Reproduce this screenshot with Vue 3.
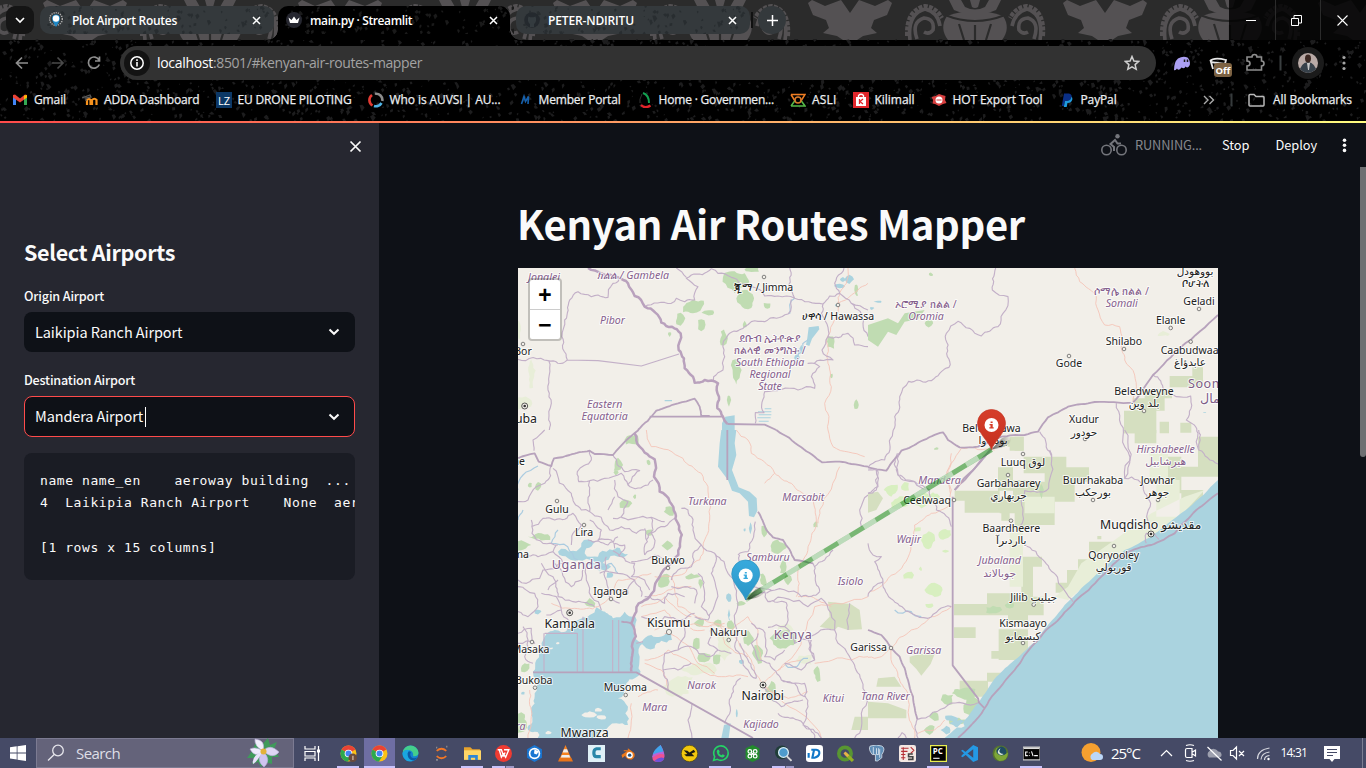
<script setup>
/* Fits a text run to a given width by spreading the difference over its letters. */
const vFit = {
  mounted(el, { value }) {
    const n = el.textContent.length
    if (!n || !value) return
    const natural = el.getBoundingClientRect().width
    el.style.letterSpacing = ((value - natural) / n).toFixed(3) + 'px'
  }
}

let seed = 7
const rnd = () => {
  seed = (seed * 16807) % 2147483647
  return seed / 2147483647
}

/* Turns a coarse list of points into a naturally jagged line. */
function rough(str, amp = 0.16, close = false) {
  let pts = str.trim().split(/\s+/).map(p => p.split(',').map(Number))
  if (close) pts.push(pts[0])
  for (let k = 0; k < 3; k++) {
    const out = [pts[0]]
    for (let i = 1; i < pts.length; i++) {
      const [x1, y1] = pts[i - 1]
      const [x2, y2] = pts[i]
      const dx = x2 - x1
      const dy = y2 - y1
      if (Math.hypot(dx, dy) > 14) {
        const t = (rnd() - 0.5) * 2 * amp
        out.push([(x1 + x2) / 2 - dy * t, (y1 + y2) / 2 + dx * t])
      }
      out.push([x2, y2])
    }
    pts = out
  }
  return 'M' + pts.map(p => p[0].toFixed(1) + ' ' + p[1].toFixed(1)).join('L') + (close ? 'Z' : '')
}
const joinRough = (list, amp, close) => list.map(s => rough(s, amp, close)).join('')

function blob(x, y, rx, ry) {
  const a = []
  for (let i = 0; i < 8; i++) {
    const t = (i / 8) * Math.PI * 2
    const r = 0.6 + rnd() * 0.55
    a.push((x + Math.cos(t) * rx * r).toFixed(1) + ',' + (y + Math.sin(t) * ry * r).toFixed(1))
  }
  return rough(a.join(' '), 0.2, true)
}
const blobs = l => l.map(b => blob(...b)).join('')
/* Survey squares given by their left, top, right and bottom edges. */
const squares = l => l.map(([a, b, c, d]) => `M${a} ${b}H${c}V${d}H${a}Z`).join('')

const speckles = (n, w, h) => {
  let d = ''
  for (let i = 0; i < n; i++) {
    const x = rnd() * w
    const y = rnd() * h
    const s = 0.8 + rnd() * 2.2
    d += `M${x.toFixed(1)} ${y.toFixed(1)}l${s.toFixed(1)} ${(-s * rnd()).toFixed(1)}l${(s * rnd()).toFixed(1)} ${s.toFixed(1)}l${(-s).toFixed(1)} ${(s * rnd() * 1.4).toFixed(1)}Z`
  }
  return d
}
const toolbarSpeckles = speckles(1700, 1366, 82)
const tabSpeckles = speckles(90, 236, 28)

const regions = [
  {
    t: 'translate(0 -78) scale(.33333)',
    green: blobs([[650, 275, 45, 38], [680, 325, 28, 40], [525, 350, 40, 22], [488, 385, 16, 22], [572, 368, 22, 10], [550, 404, 14, 20], [618, 445, 12, 26], [680, 404, 8, 10], [748, 348, 14, 12], [455, 433, 6, 8], [937, 455, 14, 26], [1015, 300, 8, 26], [655, 540, 16, 40], [633, 630, 6, 18], [1015, 645, 8, 16], [940, 557, 5, 8], [700, 238, 30, 10]]),
    pale: blobs([[12, 640, 32, 24], [3, 420, 6, 40], [40, 560, 8, 50]]),
    water: blobs([[965, 288, 18, 9], [994, 268, 15, 14], [975, 268, 10, 8], [850, 480, 10, 16], [958, 345, 8, 5], [835, 502, 10, 10]]) + 'M872 412l30-4 2 10-22 28-8 22-10-4 4-20Z' + 'M720 664h40v3h-40zM722 673h38v3h-38zM718 682h40v3h-40zM722 692h30v3h-30zM760 655v3h-20v-3zM440 630h22v4h-22zM612 700l10-20 28-4v44h-38z',
    thick: ['210,234 250,250 300,262 330,280 350,318 380,350 412,368 430,398 462,410 488,430 482,480 500,535 525,560 530,578 560,570 600,580 603,620 598,655 615,680 628,702'],
    mid: ['360,720 415,662 480,640 530,626 545,650 550,678 575,678'],
    straight: 'M395 680H615M628 702L740 704L775 720',
    thin: ['0,508 90,512 148,510 132,440 140,390 155,330 180,305 220,320 240,315 270,322 285,280 310,262', '92,512 90,600 100,640 92,690 94,720', '380,350 460,340 475,325 500,335 530,330 540,290 505,265 520,255 580,236', '475,234 505,262', '580,236 600,250 640,262 700,290 740,318 780,318 830,325 915,342 965,310 1000,340 1050,360', '965,310 950,280 970,250 978,234', '815,234 812,290 830,325', '820,328 810,372 740,395 700,395 680,410 630,435 615,460 620,500 615,540 587,560 587,575', '915,342 910,370 930,440 990,430 1010,465 1050,470', '930,440 912,480 945,510 870,520 905,530 880,560 890,595 840,600 740,605 738,668 712,668 712,700', '1000,340 1035,400 1050,440'],
    plain: 'M148 510L240 512L370 528L483 492',
    road: ['990,234 985,280 960,340 945,400 925,450 930,520 940,590 920,640 930,720', '960,340 1000,315 1020,300 1050,280'],
    river: ['830,325 815,345 815,372', '870,450 850,480 835,510']
  },
  {
    t: 'translate(350 -8) scale(.33333)',
    green: 'M0 195L60 175L90 190L110 160L170 150L150 178L110 185L85 225L60 215L30 260L0 240Z' + blobs([[188, 44, 7, 6], [182, 190, 14, 12], [205, 566, 8, 4]]),
    pale: blobs([[885, 222, 20, 8], [910, 190, 18, 6]]),
    water: blobs([[30, 125, 12, 4], [12, 145, 6, 5], [1010, 458, 6, 2]]),
    olive: squares([[905, 348, 985, 382], [973, 322, 1005, 380], [830, 388, 912, 415], [795, 415, 890, 452], [768, 452, 865, 520], [875, 485, 903, 520], [937, 488, 970, 518], [440, 530, 467, 572], [400, 540, 440, 560]]),
    thick: [],
    mid: ['0,622 55,632 100,572 160,543 225,517 240,540 275,562 330,560 400,530 470,525 510,515 540,472 600,440 680,426 795,428 855,345 940,260 1050,165', '370,567 320,625 260,690'],
    straight: 'M0 0',
    thin: ['383,24 373,90 420,110 405,160 390,200 340,228 305,205 270,184 235,220 238,290 243,322 215,340 190,362 122,364 95,410 80,470 68,535 50,600 15,610 0,622', '745,430 765,530 770,655', '855,345 890,390 925,410 968,408 955,480 990,520 992,570 1050,612', '515,515 545,575 542,680', '88,580 90,645 140,665 180,690', '25,630 30,680 0,700'],
    plain: '',
    road: ['620,24 635,65 685,110 690,150 710,195 755,200 762,240 770,300 800,345 805,390 795,425', '380,570 280,565 250,610 247,700'],
    river: []
  },
  {
    t: 'translate(0 162) scale(.33333)',
    green: blobs([[342, 30, 24, 18], [70, 320, 42, 16], [10, 345, 26, 20], [455, 245, 16, 18], [392, 308, 14, 12], [448, 347, 18, 14], [437, 455, 24, 24], [300, 105, 16, 22], [320, 220, 20, 18], [293, 128, 8, 8], [780, 348, 28, 22], [738, 300, 12, 20], [797, 410, 14, 26], [735, 450, 12, 22], [893, 283, 8, 12], [810, 450, 12, 16], [795, 625, 40, 26], [560, 685, 26, 16], [596, 690, 16, 20], [720, 670, 16, 40], [690, 625, 20, 26], [545, 580, 18, 16], [670, 520, 14, 10], [215, 520, 18, 14], [60, 170, 12, 14], [35, 165, 8, 8], [350, 200, 6, 8], [535, 640, 14, 22], [520, 440, 24, 10], [898, 730, 12, 28], [760, 790, 16, 34], [392, 98, 8, 8], [548, 460, 8, 16], [600, 580, 14, 12], [20, 715, 18, 18], [10, 880, 16, 40], [640, 590, 12, 20]]),
    pale: blobs([[480, 770, 55, 35], [540, 720, 60, 20], [620, 650, 30, 40], [800, 600, 26, 16], [860, 690, 26, 18]]),
    olive: 'M930 515L998 522L1025 540L1032 598L990 600L960 590L950 600L905 590L935 560ZM1010 860h40v40h-50z',
    water: rough('45,725 55,690 72,650 85,612 110,600 150,598 180,570 215,555 235,532 262,545 285,565 320,545 352,560 345,600 375,640 365,680 368,725 350,745 325,760 318,790 300,805 330,830 322,850 330,885 295,880 255,905 230,924 60,924 30,900 40,850 50,790 55,750', 0.22, true) + rough('370,640 400,615 460,610 462,630 430,632 410,655 385,655', 0.2, true) + 'M610 0L655 0L650 40L655 75L642 120L662 172L695 185L716 205L718 242L708 262L693 258L690 215L665 190L642 182L630 150L600 110L605 40Z' + rough('120,365 165,362 190,340 232,335 205,355 200,370 240,380 275,358 330,372 300,380 260,392 245,425 230,395 180,390 150,385', 0.25, true) + blobs([[632, 505, 9, 14], [633, 555, 4, 20], [670, 695, 10, 7], [250, 410, 26, 10], [60, 545, 14, 8], [697, 295, 5, 16], [680, 300, 4, 6], [656, 850, 3, 14], [275, 435, 12, 10], [15, 790, 6, 5]]) + 'M618 885L638 880L632 924H610Z',
    land: blobs([[215, 855, 22, 12], [250, 862, 20, 10], [240, 840, 12, 6], [50, 915, 14, 14], [90, 908, 10, 6], [120, 640, 6, 4], [100, 655, 5, 3], [270, 545, 8, 6]]),
    thick: ['350,10 365,50 380,68 410,88 408,140 425,185 455,215 472,250 480,280 486,350 468,395 430,430 412,460 395,500 362,520 355,545 340,580 345,660 340,725'],
    mid: ['0,85 50,70 62,95 100,108 108,85 155,75 215,62 230,72 285,75 362,0', '775,0 850,52 912,97 965,95 1000,102 1050,110', '720,245 745,300 765,322 795,330 830,390 885,400', '340,580 310,575'],
    straight: 'M45 727H355L705 924M628 0V150',
    thin: ['80,0 45,30 48,62', '100,108 80,160 55,170 30,210 0,215', '105,115 160,190 190,240 215,245 250,262', '215,62 220,90 178,125 182,155 215,152 260,145 310,130 330,165 390,165 405,150', '215,152 210,210 215,245', '290,150 300,200 330,215 310,260 285,265', '310,262 350,265 400,262 440,275', '285,75 320,125 365,122 330,165', '40,290 75,265 110,270 165,250 190,285 165,310 160,345', '40,270 42,310 75,340 120,345', '0,385 60,380 105,365 115,345', '105,365 135,400 75,420 65,445 25,460 0,450', '70,400 105,440 120,500 165,515 230,530', '250,262 275,300 310,290 355,310 380,300', '215,270 250,300 240,330 280,330 290,355', '380,295 380,375', '290,340 320,345 305,375 285,362', '205,400 205,450 220,500 250,540', '300,375 350,400 340,440 380,450 395,480', '245,430 300,430 350,450 330,490 290,480 250,500', '265,380 260,440 270,490 305,520', '340,395 375,390 400,380 440,385', '380,375 410,340 400,310 440,290 470,265', '400,262 405,300 385,330', '130,540 155,575 150,600', '0,470 50,490 60,530 30,560 0,545', '70,490 115,500 130,540 85,555', '0,610 40,595 50,640 0,640', '15,590 30,630 20,680 45,700', '490,235 510,240 525,300 550,345 590,370 630,430 650,470', '550,345 525,370 520,410 480,420 460,450', '590,370 580,430 585,540 570,570 530,560', '650,470 660,520 650,570 660,610 650,650 690,720 715,745', '540,430 560,490 550,530 575,560', '460,470 500,470 535,480 530,520', '370,560 420,575 440,560 490,570 530,550', '380,500 440,520 450,490 500,500', '490,570 500,620 480,660 520,650 570,680 600,660 640,670', '480,660 440,670 435,720 520,700', '580,590 570,640 600,660', '355,640 375,635', '435,720 450,780', '522,820 510,870 522,924', '665,375 670,410 700,440', '660,375 690,365 712,275', '690,510 740,485 750,515 805,518 810,548 800,590 750,592', '745,490 850,500 905,485', '750,515 870,530 910,505 950,600', '700,580 735,600 740,680 770,690 800,660', '800,590 830,640 880,630 890,690 850,720 800,700', '720,610 700,640 720,690 755,700 790,750 830,760 860,800', '780,850 840,870 900,910 910,924', '790,750 860,760 870,830 855,885 890,924', '715,745 690,690 665,640', '668,745 640,800 620,880', '735,770 790,830 855,810', '885,400 890,430 905,485', '950,600 1000,690 1030,750 1030,850 1010,924', '1050,195 1025,240 1030,290', '945,360 920,390 890,410', '995,520 990,600', '700,470 760,480', '890,690 870,620 950,600', '350,450 370,500', '300,320 270,345 210,330', '110,400 160,470 190,450 200,400', '290,200 270,240', '120,450 90,480'],
    plain: 'M78 610V725M80 610H178V725M195 560V727M284 570V725M302 570V725',
    road: ['385,0 400,50 495,85 550,130 570,170 575,270 555,350 545,390 500,430 460,440 410,440', '655,0 690,30 700,70 770,130 820,160 875,200 895,280 875,340 840,420 835,500', '965,110 905,240 900,280', '740,160 770,130', '930,0 945,50 1040,80', '100,520 170,535 240,530 300,450 400,430', '460,440 480,530 560,570 640,600 700,690 735,760', '370,560 440,540 500,590 570,590 620,580', '390,500 450,480 520,470', '370,530 440,500 520,560', '380,690 450,660 520,700 600,740 690,740', '440,610 500,640 540,700 590,730', '640,600 690,560 720,600 730,690', '735,760 800,700 890,530 1050,500', '735,765 790,800 870,785', '735,765 800,820 910,924', '890,700 1000,690 1050,680', '340,820 330,924', '410,600 480,570 560,600', '780,720 850,690', '35,780 42,850 30,924', '840,500 900,510 940,530', '600,580 620,640 690,680', '450,780 430,720 380,700', '360,800 420,780'],
    river: ['0,180 15,135 60,108', '180,390 100,340 120,300', '0,270 15,240', '835,710 810,712 800,700', '870,685 835,712', '210,400 280,400 300,430']
  },
  {
    t: 'translate(350 162) scale(.33333)',
    green: blobs([[290, 790, 50, 20], [310, 825, 28, 30], [240, 810, 20, 20], [200, 860, 16, 14], [185, 900, 20, 14], [265, 875, 30, 12], [375, 540, 30, 12], [425, 525, 14, 10], [520, 180, 8, 24]]),
    pale: squares([[425, 290, 465, 470], [845, 60, 900, 150], [470, 200, 560, 250], [865, 150, 935, 260]]) + 'M1010 180L950 200L850 250L740 330L640 400L600 470L560 500L600 510L700 425L770 365L850 325L950 245Z',
    lime: blobs([[70, 180, 24, 20], [110, 170, 16, 14], [95, 218, 34, 24], [160, 210, 30, 24], [195, 200, 22, 14], [182, 332, 24, 26], [232, 315, 20, 18], [120, 435, 16, 14], [200, 480, 30, 24], [182, 528, 14, 9], [158, 417, 6, 7], [232, 363, 12, 5], [150, 298, 12, 8]]),
    olive: squares([[260, 182, 395, 212], [290, 212, 395, 248], [395, 205, 480, 250], [425, 20, 467, 62], [390, 112, 435, 182], [435, 150, 490, 205], [467, 80, 595, 130], [530, 112, 663, 155], [470, 155, 620, 215], [480, 215, 560, 285], [400, 250, 425, 272], [440, 245, 500, 290], [460, 380, 522, 410], [460, 410, 495, 505], [357, 490, 450, 522], [258, 522, 440, 556], [440, 500, 527, 556], [420, 556, 480, 580], [258, 592, 323, 624], [392, 598, 480, 690], [370, 663, 420, 686], [357, 728, 400, 755], [275, 752, 360, 800], [663, 335, 735, 365], [688, 318, 700, 328], [630, 388, 690, 430], [597, 420, 650, 460], [563, 458, 620, 488], [768, 0, 865, 10], [800, 10, 865, 40], [900, 80, 940, 190], [940, 110, 1050, 140], [990, 20, 1050, 110], [940, 180, 1005, 240]]) + 'M125 680l30-8h45l-12 30l-28 35l-15-20l-20-20zM30 745l50-5l20 30h-75zM0 815l60 5l55 20v25h-115zM0 190l30-5l15 20l-20 35l-25 8z',
    water: rough('1050,150 960,235 900,280 850,320 770,360 700,420 640,475 590,525 540,585 500,635 440,690 385,740 340,805 300,860 230,924', 0.03) + 'L1050 924Z' + blobs([[250, 865, 24, 10], [270, 880, 26, 12], [235, 900, 16, 12]]),
    thick: [],
    mid: ['1050,190 985,240 920,310 850,345 770,370 700,440 620,515 560,580 500,640 440,720 380,790 350,835 310,885 270,924', '370,57 320,115 260,180', '0,600 40,615 70,655 95,680 120,750 135,800 148,868'],
    straight: 'M254 200V706L330 805L333 818L350 835',
    thin: ['0,340 15,375 40,380 20,395 45,455 75,510 130,550 180,565 250,530', '45,455 0,500', '90,70 90,135 140,155 185,180 205,240 250,290', '770,0 770,145 810,150 830,190 848,220 848,300', '545,60 542,175 470,182 465,240 455,290', '470,340 530,395 570,450 615,515', '148,868 240,825 330,818', '148,868 150,924', '90,924 102,908 115,924', '0,120 28,120 25,180 0,190', '835,340 835,310 860,312 873,328', '992,0 992,60 1050,102'],
    plain: '',
    road: ['250,70 250,180 240,230 190,250 140,285 125,370 60,445 0,490', '250,530 190,560 130,600 70,655', '70,655 90,740 120,790 130,880 140,924', '0,682 40,680 70,655', '150,910 200,900 230,870'],
    river: ['80,540 130,545 160,560']
  }
].map(r => ({
  ...r,
  thickD: joinRough(r.thick, 0.14),
  midD: joinRough(r.mid, 0.04),
  thinD: joinRough(r.thin, 0.16),
  roadD: joinRough(r.road, 0.12),
  riverD: joinRough(r.river, 0.2)
}))

/* [text, x, baseline, class, anchor] */
const labels = [
  ['Jonglei', 26, 12.5, 's'], ['ክልል / Gambela', 115, 10.5, 's'], ['Pibor', 94.5, 56, 's'],
  ['ጂማ / Jimma', 245.5, 23, 'c'], ['ሀዋሳ / Hawassa', 320, 52, 'c'],
  ['ደቡብ ኢትዮጵያ', 252, 74, 's u'], ['ክልላዊ መንግስት /', 252, 86, 's u'], ['South Ethiopia', 252, 98, 's'], ['Regional', 252, 110, 's'], ['State', 252, 122, 's'],
  ['Bor', 5, 87, 'c'], ['Juba', 19, 155, 'b', 'end'], ['Eastern', 86.7, 140, 's'], ['Equatoria', 86.7, 152, 's'],
  ['ኦሮሚያ ክልል /', 408, 40, 's u'], ['Oromia', 408, 52, 's'], ['ሶማሌ ክልል /', 603.7, 27, 's u'], ['Somali', 603.7, 39, 's'],
  ['بووهودل', 677, 7, 'c'], ['ቦሆትለ', 677, 18.5, 'c'], ['Geladi', 681, 37, 'c'], ['Elanle', 652.7, 56, 'c'], ['Shilabo', 606, 77, 'c'], ['Gode', 551, 99, 'c'],
  ['Caabudwaaq', 642.7, 86, 'c', 'start'], ['عابدؤاغ', 672, 98, 'c'], ['Soomaaliya', 670, 119.5, 'n', 'start'], ['الصومال', 682, 135, 'n', 'start'],
  ['Beledweyne', 626, 127.3, 'c'], ['بلد وين', 626, 139, 'c'], ['Xudur', 566, 155.3, 'c'], ['حودور', 566, 168, 'c'],
  ['Beled Hawa', 473.5, 164, 'c'], ['بوده وا', 475, 176, 'c'], ['Luuq لوق', 505, 197.6, 'c'], ['Garbahaarey', 490.5, 219.3, 'c'], ['جربهاري', 490.5, 231, 'c'],
  ['Hirshabeelle', 647.7, 185, 's'], ['هيرشابيل', 647.7, 196.5, 's u'], ['Buurhakaba', 575, 215.7, 'c'], ['بورحكب', 575, 227.5, 'c'], ['Jowhar', 639.7, 216.3, 'c'], ['جوهر', 639.7, 228, 'c'],
  ['Mandera', 421.5, 216, 's'], ['Ceelwaaq', 409, 235.7, 'c'], ['Baardheere', 493.3, 264.3, 'c'], ['بااردىرآ', 493.3, 276, 'c'],
  ['Jubaland', 481.7, 296.3, 's'], ['جوبالاند', 481.7, 308.5, 's u'], ['Muqdisho مقديشو', 632.7, 260.5, 'b'], ['Qoryooley', 595.7, 290.7, 'c'], ['قوريولي', 595.7, 303, 'c'],
  ['Jilib جيليب', 515.7, 332.7, 'c'], ['Kismaayo', 505, 359.3, 'c'], ['كيسمايو', 505, 371.5, 'c'], ['Wajir', 390.7, 275.3, 's'], ['Garissa', 405.7, 386.3, 's'], ['Garissa', 368.8, 383.3, 'c', 'end'], ['Tana River', 391.7, 432.3, 's', 'end'],
  ['Gulu', 39, 244.6, 'c'], ['Lira', 66, 268, 'c'], ['Turkana', 189.3, 236.6, 's'], ['Marsabit', 285.3, 233, 's'], ['Samburu', 250, 292.6, 's'], ['ma', 11, 290, 'c', 'end'], ['ne', 7, 196.6, 'c', 'end'],
  ['Uganda', 58.5, 301, 'n'], ['Bukwo', 150, 296.3, 'c'], ['Iganga', 92.5, 327, 'c'], ['Kampala', 51.7, 359.5, 'b'], ['Kisumu', 150.7, 358.7, 'b'], ['Nakuru', 210.5, 368, 'c'], ['Kenya', 275, 371.3, 'n'], ['Isiolo', 332.4, 317, 's'],
  ['Masaka', 31.5, 385.3, 'c', 'end'], ['Bukoba', 34.5, 415.6, 'c', 'end'], ['Musoma', 107.4, 423.3, 'c'], ['Narok', 183.7, 420.6, 's'], ['Mara', 136.7, 443, 's'], ['Kajiado', 243, 460, 's'], ['Kitui', 315.4, 433.6, 's'], ['Nairobi', 244.7, 432.3, 'b'], ['Mwanza', 66.6, 468.6, 'b'], ['ra', 7.5, 462.3, 's', 'end']
]
const dots = [[681, 41], [652.7, 60], [606, 81], [551, 88], [672.7, 73.7], [626, 143], [567, 171], [505, 186], [490, 207], [575, 232], [640, 232], [436, 232], [493, 252.7], [596, 278], [515.7, 336.7], [505, 375], [373, 380], [39, 233], [66, 257], [150, 300], [93, 331], [210.7, 372], [14, 374], [17, 419.7], [107.7, 427], [246, 9], [320, 37], [5, 76]]
const capitals = [[6.7, 138], [633, 266], [51.7, 344.7], [245, 417]]

const tabs = [
  { id: 'pin', text: 'Plot Airport Routes', w: 105 },
  { id: 'crown', text: 'main.py · Streamlit', w: 102, active: true },
  { id: 'git', text: 'PETER-NDIRITU', w: 86 }
]
const bookmarks = [
  ['gmail', 'Gmail', 32], ['moodle', 'ADDA Dashboard', 95.5], ['lz', 'EU DRONE PILOTING', 114], ['auvsi', 'Who is AUVSI | AU...', 111], ['m', 'Member Portal', 82],
  ['gov', 'Home · Governmen...', 115.5], ['asli', 'ASLI', 24.5], ['kili', 'Kilimall', 40], ['hot', 'HOT Export Tool', 90], ['paypal', 'PayPal', 36]
]
const apps = ['chrome1', 'chrome2', 'edge', 'jupyter', 'folder', 'wps', 'globe', 'vlc', 'c', 'blender', 'drop', 'bee', 'whatsapp', 'knot', 'lens', 'id', 'qgis', 'pg', 'swat', 'pc', 'vs', 'swirl', 'cmd']
const open = { chrome1: 'u', chrome2: 'on u', folder: 'u', wps: 'u two', whatsapp: 'u', lens: 'u two', pc: 'u', cmd: 'u' }
const code = [['name name_en    aeroway building  ...', 310.8], ['4  Laikipia Ranch Airport    None  aeroway', 352.8], ['', 0], ['[1 rows x 15 columns]', 176.4]]
</script>

<template>
  <div class="screen">
    <header class="chrome">
      <svg class="damask" width="1366" height="40">
        <defs>
          <pattern id="dm" x="140" width="255" height="40" patternUnits="userSpaceOnUse">
            <path d="M158 3L162 0L175 6L191 0L200 13L209 0L225 6L238 0L242 3L237 15L224 20L221 28L227 33L213 36L207 40H193L187 36L173 33L179 28L176 20L163 15Z" fill="#545153" />
            <path d="M42 16Q70 6 98 16Q106 28 97 40H43Q34 28 42 16Z" fill="#545153" />
            <path d="M40 15Q70 27 100 15M54 24L59 40M70 25V40M86 24L81 40" fill="none" stroke="#2b2b2b" stroke-width="2.200" />
            <path d="M44 0H56L60 7Q70 12 80 7L84 0H96L91 10Q70 19 49 10Z" fill="#545153" />
            <path d="M65 0H75L73 7Q70 9 67 7Z" fill="#545153" />
            <g fill="none" stroke="#545153" stroke-width="3.600">
              <path d="M5 40Q2 14 20 9Q33 12 35 26M12 39Q6 22 19 18Q30 19 28 30Q24 35 19 32" />
              <path d="M135 40Q139 14 122 9Q110 12 107 26M129 39Q135 22 123 18Q112 19 114 30Q118 35 123 32" />
            </g>
            <path d="M2 36Q1 10 20 6Q31 7 37 18M138 36Q140 10 122 6Q111 7 105 18" fill="none" stroke="#545153" stroke-width="4" stroke-dasharray="4 1.300" />
          </pattern>
        </defs>
        <rect width="1366" height="40" fill="#2b2b2b" />
        <rect width="1366" height="40" fill="url(#dm)" />
      </svg>
      <svg class="speck" width="1366" height="82"><path :d="toolbarSpeckles" fill="#1d1d1e" /></svg>

      <div class="tabstrip">
        <button class="tabsearch"><svg width="10" height="7"><path d="M1 1l4 4 4-4" fill="none" stroke="#fff" stroke-width="1.700" /></svg></button>
        <div v-for="t in tabs" :key="t.id" :class="['tab', { active: t.active }]">
          <svg class="tabspeck" width="236" height="28"><path :d="tabSpeckles" :fill="t.active ? '#1a1a1a' : '#282d30'" /></svg>
          <svg v-if="t.id === 'pin'" class="fav" width="16" height="16"><circle cx="8" cy="7" r="6.300" fill="none" stroke="#a9a9a9" stroke-width="1.500" stroke-dasharray="1.200 1" /><path d="M8 15Q4 9 4 6.500A4 4 0 0 1 12 6.500Q12 9 8 15Z" fill="#1e88c7" /><circle cx="8" cy="6.500" r="3.200" fill="#fff" /></svg>
          <svg v-else-if="t.id === 'crown'" class="fav" width="16" height="16"><circle cx="8" cy="8" r="8" fill="#262730" /><path d="M2.500 5.500L5.500 8L8 4.500L10.500 8L13.500 5.500L12 11H4Z" fill="#fff" /></svg>
          <svg v-else class="fav" width="16" height="16"><circle cx="8" cy="8" r="7.800" fill="#24292e" /><path d="M6 15V12Q3.500 10 4 6.500L4.500 4.500L6.500 5.300H9.500L11.500 4.500L12 6.500Q12.500 10 10 12V15Z" fill="#343b3f" /></svg>
          <span v-fit="t.w" class="tabtext">{{ t.text }}</span>
          <svg class="x" width="9" height="9"><path d="M1 1l7 7M8 1l-7 7" stroke="#fff" stroke-width="1.500" /></svg>
        </div>
        <i class="sep"></i>
        <button class="plus"><svg width="11" height="11"><path d="M5.500 0v11M0 5.500h11" stroke="#fff" stroke-width="1.500" /></svg></button>
        <div class="wincontrols">
          <span><svg width="10" height="10"><path d="M0 5.500h10" stroke="#fff" /></svg></span>
          <span><svg width="11" height="11"><path d="M.5 3.500h7v7h-7zM3 3V.5h7.500V8H8" fill="none" stroke="#fff" /></svg></span>
          <span><svg width="11" height="11"><path d="M.5.5l10 10M10.500.5l-10 10" stroke="#fff" stroke-width="1.100" /></svg></span>
        </div>
      </div>

      <div class="toolbar">
        <svg class="nav" width="110" height="24" fill="none" stroke-width="1.700">
          <path d="M28 12H17M22 6.500L16.500 12L22 17.500" stroke="#8f8f8f" /><path d="M52 12H63M57.500 6.500L63 12L57.500 17.500" stroke="#4a4a4a" />
          <path d="M99 9A5.600 5.600 0 1 0 99.300 13.500M99.500 5.500V10H95" stroke="#8f8f8f" />
        </svg>
        <div class="url">
          <span class="info"><svg width="16" height="16"><circle cx="8" cy="8" r="6.200" fill="none" stroke="#fff" stroke-width="1.500" /><path d="M8 7v4.500M8 4.300v1.600" stroke="#fff" stroke-width="1.600" /></svg></span>
          <span v-fit="56" class="host">localhost</span><span v-fit="209" class="path">:8501/#kenyan-air-routes-mapper</span>
          <svg class="star" width="16" height="16"><path d="M8 1.500L9.900 6L14.700 6.400L11.100 9.600L12.200 14.300L8 11.800L3.800 14.300L4.900 9.600L1.300 6.400L6.100 6Z" fill="none" stroke="#d0d0d0" stroke-width="1.500" /></svg>
        </div>
        <svg class="ext" width="210" height="46">
          <path d="M18 30Q18 22 22 18.500Q27 15.500 31.500 17.500Q34.500 20 33.800 25Q32 29 29.500 26.500Q28.500 29.500 25.500 27.500Q22.500 31.500 21 28.500Q19.500 31 18 30Z" fill="#ab9ff2" /><path d="M28.500 19.500v2.600M31.500 19.500v2.600" stroke="#181818" stroke-width="1.500" />
          <path d="M54 21Q58 17 70 20L69 24L55 22L57 29" fill="none" stroke="#e8e8e8" stroke-width="1.800" />
          <rect x="58" y="23" width="18" height="14" rx="3" fill="#7c6243" /><text x="67" y="34.300" text-anchor="middle" class="off">Off</text>
          <path d="M91 17H96Q96 14.500 98.500 14.500T101 17H105.500V21Q108 21 108 23.500T105.500 26V30H91V26Q94 26 94 23.500T91 21Z" fill="none" stroke="#8e8e8e" stroke-width="1.600" />
          <path d="M124.500 15.500v15" stroke="#3a3f40" stroke-width="2" />
          <circle cx="152" cy="23" r="16" fill="#1b1b1b" />
          <clipPath id="av"><circle cx="152" cy="23" r="10" /></clipPath>
          <g clip-path="url(#av)"><path d="M142 13h21v20h-21z" fill="#b9aaa6" /><path d="M143 34Q144 23 152 22Q160 23 161 34Z" fill="#37414a" /><path d="M151 23h3l-1 7h-1z" fill="#c8c8c8" /><ellipse cx="152" cy="18.500" rx="3" ry="4" fill="#3c2822" /></g>
          <g fill="#a5a5a5"><circle cx="188" cy="17.500" r="1.600" /><circle cx="188" cy="23" r="1.600" /><circle cx="188" cy="28.500" r="1.600" /></g>
        </svg>
      </div>

      <div class="bookmarks">
        <a v-for="b in bookmarks" :key="b[0]">
          <svg width="16" height="16">
            <g v-if="b[0] === 'gmail'"><path d="M1 13V4.500L4 6.500V13Z" fill="#4285f4" /><path d="M15 13V4.500L12 6.500V13Z" fill="#34a853" /><path d="M1 3L3 2.500L8 6.500L13 2.500L15 3V5.500L8 10.500L1 5.500Z" fill="#ea4335" /><path d="M12 3.500L15 3V5.500L12 7.500Z" fill="#fbbc04" /></g>
            <g v-else-if="b[0] === 'moodle'" fill="none"><path d="M5 13V7M5 8Q7 6 8.500 8V13M10 13V8Q12.500 5.500 14.500 8V13" stroke="#f7931e" stroke-width="2.200" /><path d="M0 6L8 3L9 5L4 6V9" stroke="#5a5a5a" stroke-width="1.300" /></g>
            <g v-else-if="b[0] === 'lz'"><rect width="16" height="16" fill="#0c3866" /><text x="8" y="12.500" class="lz" text-anchor="middle">LZ</text></g>
            <g v-else-if="b[0] === 'auvsi'" fill="none" stroke-width="2.600"><path d="M7 1.800A6.300 6.300 0 0 1 14.300 9" stroke="#8c8c8c" /><path d="M13.500 11A6.300 6.300 0 0 1 6 13.900" stroke="#4fb4e6" /><path d="M4.500 13.500A6.300 6.300 0 0 1 4 3" stroke="#e23a32" /></g>
            <path v-else-if="b[0] === 'm'" d="M4.500 12L7 4.500L8.500 9.500L11.500 4.500L11 12" fill="none" stroke="#1661ad" stroke-width="1.600" />
            <g v-else-if="b[0] === 'gov'" fill="none"><path d="M6 1Q12 3 12 11" stroke="#12a150" stroke-width="2" /><path d="M4 13Q8 17 13.500 13.500" stroke="#e2242b" stroke-width="2.400" /><path d="M5 2Q2 8 3 11" stroke="#333" /></g>
            <g v-else-if="b[0] === 'asli'" fill="none" stroke-width="1.500"><path d="M1 2.500H15L11 9M1 2.500L5 9" stroke="#ef7d22" /><path d="M1 14H15L11 8.500M1 14L5 8.500" stroke="#55b948" /><circle cx="8" cy="8" r="3" stroke="#d9792a" /></g>
            <g v-else-if="b[0] === 'kili'"><rect width="16" height="16" fill="#e1272c" /><path d="M3 5H13V14H3Z" fill="#fff" /><path d="M5.500 5V3.500Q8 1 10.500 3.500V5" fill="none" stroke="#fff" stroke-width="1.300" /><path d="M6.500 7v5M10 7L7 9.500L10 12" fill="none" stroke="#e1272c" stroke-width="1.300" /></g>
            <g v-else-if="b[0] === 'hot'"><path d="M8 2L11 3L14.500 4L14 8L15.500 11L12 12L8 14L4 12L1.500 11.500L2 8L.5 5L4.500 4Z" fill="#d73f3f" /><circle cx="8" cy="8" r="3.500" fill="#fff" /><path d="M5.500 8h5" stroke="#d73f3f" /></g>
            <g v-else><path d="M5 1.500H10Q14 2.500 12 6.500Q11 9 7.500 9H6L5 14H2.800Z" fill="#0a2f86" /><path d="M12.500 4.500Q14.500 7 12 10Q10.500 11 8.500 11L7.700 15H4.800L6 9H8Q12 8.500 12.500 4.500Z" fill="#1f9bde" /></g>
          </svg>
          <span v-fit="b[2]">{{ b[1] }}</span>
        </a>
        <svg class="more" width="90" height="20"><path d="M2 6l4 4-4 4M7.500 6l4 4-4 4" fill="none" stroke="#aaa" stroke-width="1.400" /><path d="M29.500 3.500v13" stroke="#363b3c" stroke-width="2" /><path d="M47 5.500Q47 4.500 48 4.500H52L54 6.500H61Q62 6.500 62 7.500V15Q62 16 61 16H48Q47 16 47 15Z" fill="none" stroke="#b8b8b8" stroke-width="1.500" /></svg>
        <span v-fit="79" class="all">All Bookmarks</span>
      </div>
    </header>

    <div class="decoration"></div>

    <div class="app">
      <aside class="sidebar">
        <svg class="close" width="13" height="13"><path d="M1.500 1.500l10 10M11.500 1.500l-10 10" stroke="#fafafa" stroke-width="1.700" /></svg>
        <h2><span v-fit="151">Select Airports</span></h2>
        <label><span v-fit="80">Origin Airport</span></label>
        <div class="select"><span v-fit="147.500">Laikipia Ranch Airport</span><svg width="12" height="8"><path d="M1.500 1.500l4.500 4.300 4.500-4.300" fill="none" stroke="#fafafa" stroke-width="2" /></svg></div>
        <label><span v-fit="111">Destination Airport</span></label>
        <div class="select focus"><span v-fit="108">Mandera Airport</span><i class="caret"></i><svg width="12" height="8"><path d="M1.500 1.500l4.500 4.300 4.500-4.300" fill="none" stroke="#fafafa" stroke-width="2" /></svg></div>
        <pre class="code"><div v-for="(l, i) in code" :key="i"><span v-fit="l[1]">{{ l[0] }}</span></div></pre>
      </aside>

      <main class="main">
        <div class="status">
          <svg width="26" height="22" fill="none" stroke="#74767c" stroke-width="1.600"><circle cx="5.500" cy="16" r="4.700" /><circle cx="20.500" cy="16" r="4.700" /><circle cx="16.500" cy="2.300" r="2.200" fill="#74767c" stroke="none" /><path d="M13 17V13L9.500 10L14 6L16.500 9.500H20" stroke-width="2" /></svg>
          <span v-fit="67" class="run">RUNNING...</span>
          <span v-fit="27.500" class="stop">Stop</span>
          <span v-fit="41.500" class="deploy">Deploy</span>
          <svg class="kebab" width="5" height="15" fill="#fafafa"><circle cx="2.500" cy="2.200" r="1.800" /><circle cx="2.500" cy="7.300" r="1.800" /><circle cx="2.500" cy="12.400" r="1.800" /></svg>
        </div>
        <h1><span v-fit="508">Kenyan Air Routes Mapper</span></h1>
        <div class="map">
          <svg width="700" height="470" viewBox="0 0 700 470">
            <rect width="700" height="470" fill="#f2efe9" />
            <g v-for="r in regions" :key="r.t" :transform="r.t" fill="none" stroke-linejoin="round">
              <path v-if="r.olive" :d="r.olive" fill="#d5dfc0" />
              <path :d="r.pale" fill="#e8eed8" />
              <path v-if="r.lime" :d="r.lime" fill="#d8efc0" />
              <path :d="r.green" fill="#c0dcb2" />
              <path :d="r.water" fill="#aad3df" />
              <path v-if="r.land" :d="r.land" fill="#f2efe9" />
              <path :d="r.riverD" stroke="#aacbe0" stroke-width="3.500" />
              <path :d="r.roadD" stroke="#f5c3b6" stroke-width="2.600" />
              <path :d="r.thinD + (r.plain || '')" stroke="#c3b0c8" stroke-width="3.400" />
              <path :d="r.midD + r.straight" stroke="#b7a2bc" stroke-width="5.500" />
              <path :d="r.thickD" stroke="#b9a1bd" stroke-width="7.500" />
            </g>
            <g fill="#f2efe9" stroke="#666" stroke-width=".8">
              <circle v-for="(d, i) in dots" :key="i" :cx="d[0]" :cy="d[1]" r="1.800" />
              <circle cx="151" cy="364" r="2.600" />
              <g v-for="(d, i) in capitals" :key="'k' + i"><circle :cx="d[0]" :cy="d[1]" r="3" stroke="#333" /><circle :cx="d[0]" :cy="d[1]" r="1.300" fill="#333" stroke="none" /></g>
            </g>
            <text v-for="(l, i) in labels" :key="i" :x="l[1]" :y="l[2]" :class="l[3]" :text-anchor="l[4] || 'middle'">{{ l[0] }}</text>
            <path d="M227.500 331.500L473.500 181.500" stroke="#008000" stroke-opacity=".5" stroke-width="5" />
            <path d="M227.500 331.500L473.500 181.500" stroke="#fff" stroke-opacity=".5" stroke-width="5" stroke-dasharray="14 16" stroke-dashoffset="-18.500" />
            <defs>
              <linearGradient id="sh"><stop offset="0" stop-opacity=".6" /><stop offset="1" stop-opacity="0" /></linearGradient>
              <linearGradient id="rd" x2="0" y2="1"><stop offset="0" stop-color="#d63e2a" /><stop offset="1" stop-color="#c5301f" /></linearGradient>
              <linearGradient id="bl" x2="0" y2="1"><stop offset="0" stop-color="#38aadd" /><stop offset="1" stop-color="#2a95c6" /></linearGradient>
            </defs>
            <g v-for="m in [['rd', 473.500, 181.500, '#c43a28'], ['bl', 227.700, 332, '#2e93c0']]" :key="m[0]" :transform="`translate(${m[1]} ${m[2]})`">
              <path d="M0 0L10-11Q17-15 20-10Q19-5 10-2Z" fill="url(#sh)" />
              <path d="M0 0C-2-7-14-17-14-26A14 14 0 0 1 14-26C14-17 2-7 0 0Z" :fill="`url(#${m[0]})`" :stroke="m[3]" stroke-width=".7" />
              <circle cy="-24.500" r="7" fill="#fff" />
              <path d="M-.9-28h2v1.600h-2zM-2-25.500H1.200V-22.200H2.200V-21H-2.200V-22.200H-1V-24.300H-2Z" :fill="m[0] === 'rd' ? '#d63e2a' : '#38aadd'" />
            </g>
          </svg>
          <div class="zoom"><a>+</a><a>−</a></div>
        </div>
      </main>
      <div class="scroll"><i></i></div>
    </div>

    <footer class="taskbar">
      <span class="start"><svg width="16" height="16" fill="#fff"><path d="M0 2.300L6.700 1.300V7.500H0ZM7.500 1.200L16 0V7.500H7.500ZM0 8.400H6.700V14.600L0 13.600ZM7.500 8.400H16V16L7.500 14.800Z" /></svg></span>
      <div class="search">
        <svg width="18" height="18" fill="none" stroke="#e6e6ec" stroke-width="1.300"><circle cx="11" cy="6.500" r="5.300" /><path d="M7.200 10.500L1 16.500" /></svg>
        <span v-fit="44">Search</span>
        <svg class="flower" width="34" height="30" viewBox="0 0 34 30"><path d="M10 4L15 8L22 0L24 7L31 4L28 11L33 19L26 19L26 26L19 24L15 29L12 24L6 26L8 20L1 20L6 13Z" fill="#3f9a5b" /><path d="M17 13Q8 8 9 1Q20 2 17 13Z" fill="#f1edfc" stroke="#b7abd8" stroke-width=".6" /><path d="M17 13Q24 5 33 14Q27 22 17 13Z" fill="#ded6f5" stroke="#b7abd8" stroke-width=".6" /><path d="M17 13Q26 22 18 29Q9 22 17 13Z" fill="#cfc4f0" stroke="#b7abd8" stroke-width=".6" /><path d="M17 13Q9 21 4 11Q10 8 17 13Z" fill="#efeafd" stroke="#b7abd8" stroke-width=".6" /><path d="M17 13Q11 24 7 26Q5 18 17 13Z" fill="#e8e2fb" /><circle cx="17.500" cy="13.500" r="3" fill="#e3b23a" /></svg>
      </div>
      <span class="taskview"><svg width="17" height="17" fill="none" stroke="#fff" stroke-width="1.200"><path d="M1 1v3h10V1M1 16v-3h10v3M1 6.500h10v4.500H1zM14.500 1v15" /><path d="M13 4.500h3v3h-3z" fill="#fff" stroke="none" /></svg></span>
      <div class="apps">
        <span v-for="a in apps" :key="a" :class="['cell', open[a]]">
          <svg width="17" height="17" viewBox="0 0 16 16">
            <g v-if="a === 'chrome1' || a === 'chrome2'"><circle cx="8" cy="8" r="7.500" fill="#fbc116" /><path d="M8 8L1.500 4.200A7.500 7.500 0 0 1 14.500 4.200Z" fill="#ea4335" /><path d="M8 8L1.500 4.200A7.500 7.500 0 0 0 7.500 15.500L11 10Z" fill="#2da94f" /><circle cx="8" cy="8" r="3.600" fill="#fff" /><circle cx="8" cy="8" r="2.800" fill="#4285f4" /><g v-if="a === 'chrome1'"><circle cx="12" cy="12" r="4" fill="#6b4a3c" /><path d="M11.500 10h1.300v4h-1.300z" fill="#c9b2a2" /></g></g>
            <g v-else-if="a === 'edge'"><circle cx="8" cy="8" r="7.500" fill="#1583cf" /><path d="M.6 7A7.500 7.500 0 0 1 15.500 7Q15.500 11 10.500 10.500Q11 6 7 5Q3 4 .6 7Z" fill="#45cf8c" /><path d="M.6 7Q3 3.500 7.500 5Q5 5.500 5.500 9Q6 14 11 14.500Q5 17 2 12.500Q0 10 .6 7Z" fill="#1aa6e0" /><path d="M5.300 8Q5 14 10.500 14.600Q13 14 14.500 11.800Q9 14 7.800 9.500Q7.600 7.800 8.500 7Q6 5 5.300 8Z" fill="#0c59a4" /></g>
            <g v-else-if="a === 'jupyter'" fill="none" stroke="#f37726" stroke-width="1.700"><path d="M3.500 5.500Q8 1.500 12.500 5.500M3.500 10.500Q8 14.500 12.500 10.500" /><path d="M3 2.500h1M12.500 1.500h1M3 14h1.500" stroke="#989798" /></g>
            <g v-else-if="a === 'folder'"><path d="M0 2H6L8 4H15V7H0Z" fill="#e6a32c" /><path d="M0 5H16V14H0Z" fill="#ffd666" /><path d="M4 14V9.500H13V14H10.500V12H6.500V14Z" fill="#2f86d6" /></g>
            <g v-else-if="a === 'wps'"><circle cx="8" cy="8" r="8" fill="#ef3b32" /><path d="M2.500 4.500H6L8 10L9.500 7M4 4.500L6 11.500L8 8.500L10 11.500L13 4.500H8.500" fill="none" stroke="#fff" stroke-width="1.300" /></g>
            <g v-else-if="a === 'globe'"><path d="M8 0L15 4V12L8 16L1 12V4Z" fill="#1976d2" /><circle cx="8" cy="8" r="5.400" fill="#fff" /><circle cx="8" cy="8" r="3.800" fill="#1976d2" /><path d="M8 4L12 6L10 9L7.500 8Z" fill="#fff" /></g>
            <g v-else-if="a === 'vlc'"><path d="M8 0L13.500 13H2.500Z" fill="#f58220" /><path d="M6.500 4H9.500L10.700 7H5.300ZM4.500 9.500H11.500L12.500 12H3.500Z" fill="#eee" /><path d="M2.500 12H13.500L15 15.500H1Z" fill="#e8751a" /></g>
            <g v-else-if="a === 'c'"><path d="M0 0H16V16H0Z" fill="#dff0f7" /><path d="M12 3.500H8Q5.500 4 5.500 7.500T8 11H12" fill="none" stroke="#2986a8" stroke-width="3" /></g>
            <g v-else-if="a === 'blender'" transform="translate(1.500 2.500) scale(.85)"><path d="M1 8L7 4H3.500V3H9L7.500 1.500L8.500 1L15 6Q17 10 12.500 13Q7 14 5 9L2 11.500Z" fill="#ee7a1a" /><circle cx="10" cy="8.300" r="3.500" fill="#fff" /><circle cx="10" cy="8.300" r="1.900" fill="#265787" /></g>
            <g v-else-if="a === 'drop'"><path d="M10 0Q14 7 13.500 11A6 5.500 0 0 1 2 11Q3 6 10 0Z" fill="#b964d9" /><path d="M10 0Q12 4 12.500 6Q7 7 2.500 9Q4 4 10 0Z" fill="#40a4ed" /><path d="M2.300 12Q8 7 13.500 9Q14 16 8 16T2.300 12Z" fill="#ef5292" /><path d="M4 15Q9 10 13.500 12.500Q12 16 8 16Q5.500 16 4 15Z" fill="#6b52d8" /></g>
            <g v-else-if="a === 'bee'"><circle cx="8" cy="8" r="7.700" fill="#f2c80e" stroke="#3c3600" stroke-width=".5" /><path d="M2.500 5L6 5.500L8 7L12 4.500L13.500 6.500L10 8L12.500 10.500L9 10.500L5 10.500L3 9L6 8.500Z" fill="#1c1c10" /></g>
            <g v-else-if="a === 'whatsapp'"><path d="M1.500 14.500L2.500 11A6.800 6.800 0 1 1 5 13.500Z" fill="none" stroke="#25d366" stroke-width="1.500" /><path d="M5 4.500L6.500 4.500L7.300 6.500L6.500 7.500Q7.500 9.300 9 9.700L10 8.800L12 9.700Q12 12 9.500 11.700Q5 10.500 4.400 6Z" fill="#25d366" /></g>
            <g v-else-if="a === 'knot'"><path d="M8 0L14.500 3V13L8 16L1.500 13V3Z" fill="#238b2d" /><g fill="none" stroke="#fff" stroke-width="1.200"><circle cx="5.500" cy="6" r="1.700" /><circle cx="10.500" cy="6" r="1.700" /><circle cx="5.500" cy="10.500" r="1.700" /><circle cx="10.500" cy="10.500" r="1.700" /><path d="M6.500 7L9.500 9.500M9.500 7L6.500 9.500" /></g></g>
            <g v-else-if="a === 'lens'"><circle cx="6.500" cy="7" r="6.500" fill="#203e39" /><circle cx="8" cy="7" r="4.600" fill="#4e9bcc" stroke="#d9ecf5" stroke-width="1.200" /><path d="M11 10.500L15.500 15" stroke="#d8d8d8" stroke-width="1.800" /></g>
            <g v-else-if="a === 'id'"><rect width="16" height="16" rx="3" fill="#fff" /><path d="M5 4.500H9.500Q13 5 12.500 8T8 12H5M7.500 5L6 12M2.500 7.500V12" fill="none" stroke="#1177c8" stroke-width="2" /></g>
            <g v-else-if="a === 'qgis'"><circle cx="7.500" cy="8" r="5.800" fill="none" stroke="#589632" stroke-width="3.400" /><path d="M8 8L15 15" stroke="#93b023" stroke-width="3" /><path d="M7 7L10.500 10.500" stroke="#e8b04c" stroke-width="2.500" /></g>
            <g v-else-if="a === 'pg'"><path d="M2 1Q8-1 13 1Q17 3 13 9V12L9 15H7V9H4Q0 4 2 1Z" fill="#5f8db5" stroke="#e6edf4" stroke-width=".7" /><path d="M5 2V9M8 3V9H10V3M11 4V12" stroke="#dfe9f2" stroke-width=".8" fill="none" /></g>
            <g v-else-if="a === 'swat'"><rect width="16" height="16" rx="2" fill="#f4e8e3" /><path d="M2 3H9M2 6H8M2 9H6M2 12H6M11 2L14 5L11 8M4 2V14" fill="none" stroke="#b52f35" stroke-width="1" /><path d="M13 8.500H9V11H13V13.500H8.500" fill="none" stroke="#444" stroke-width="1.500" /></g>
            <g v-else-if="a === 'pc'"><path d="M.5.5H15.500V15.500H.5Z" fill="#000" stroke="#e9ee50" stroke-width="1.300" /><text x="2.500" y="8.500" class="pct">PC</text><path d="M3 12.500h6" stroke="#fff" /></g>
            <g v-else-if="a === 'vs'"><path d="M11.500 0L16 2V14L11.500 16L1.500 6.500L0 5.500L1.500 4.500L11.500 12V4L1.500 11.500L0 10.500L1.500 9Z" fill="#2499e4" /></g>
            <g v-else-if="a === 'swirl'"><circle cx="8" cy="8" r="7.500" fill="#55742f" /><circle cx="8.500" cy="6.500" r="5" fill="#1f4b63" /><path d="M9 1Q2 4 5 8Q9 12 15 7Q15 15 7 15Q-1 11 4 3Z" fill="#7da637" /><path d="M8 3Q5 8 11 8.500Q8 10.500 5.500 7.500Q5 5 8 3Z" fill="#dce8d8" /></g>
            <g v-else><path d="M0 2H16V14H0Z" fill="#050505" stroke="#c8c8c8" /><path d="M.5 3H15.500" stroke="#ddd" stroke-width="1.600" /><path d="M4.500 6.500H2.500V10H4.500M6 7v.8M6 9.300v.8M8 6L9.500 10.500M10.500 10H14" fill="none" stroke="#fff" /></g>
          </svg>
        </span>
      </div>
      <div class="tray">
        <svg class="sun" width="24" height="22"><circle cx="10" cy="10.500" r="9.500" fill="#f5a030" /><path d="M11 18A3.800 3.800 0 0 1 11.500 11.500A4.500 4.500 0 0 1 19 12A3 3 0 0 1 19 18Z" fill="#bcd7f7" /></svg>
        <span v-fit="29" class="temp">25°C</span>
        <svg class="sys" width="120" height="18" fill="none" stroke="#fff" stroke-width="1.200">
          <path d="M2 12L7.500 6.500L13 12" />
          <path d="M28 4.500H33V13.500H28Q26.500 13.500 26.500 12V6Q26.500 4.500 28 4.500ZM33.500 8L36.500 6V12L33.500 10M27 1.500Q31 0 35 1.500M27 16.500Q31 18 35 16.500" />
          <path d="M50 13.500A4 4 0 0 1 50.500 7A5 5 0 0 1 59 7.500A3 3 0 0 1 60 13.500Z" fill="#9da0ae" stroke="none" /><path d="M48.500 3L62.500 16.500" />
          <path d="M71.500 6.500H74L77.500 3V15L74 11.500H71.500ZM80 7L85 12M85 7L80 12" />
          <path d="M98.500 15Q98.500 6 110.500 4M102 15.500Q102.500 9 110.500 8M105.500 16Q105.500 12 110.500 11.500" stroke="#d7d8df" /><circle cx="109.500" cy="15" r="1.200" fill="#fff" stroke="none" />
        </svg>
        <span v-fit="26.500" class="clock">14:31</span>
        <svg class="note" width="16" height="17"><path d="M0 0H16V13H10.500L8 16L5.500 13H0Z" fill="#fff" /><path d="M3 3.500H13M3 6.500H13M3 9.500H9" stroke="#454a66" stroke-width="1.200" /></svg>
      </div>
    </footer>
  </div>
</template>

<style>
html, body { margin: 0; background: #0e1117; overflow: hidden; }
</style>

<style scoped>
.screen { width: 1366px; height: 768px; display: flex; flex-direction: column; overflow: hidden; font-family: "Open Sans", "Noto Sans", sans-serif; color: #fff; }
.screen span { white-space: pre; }
svg { display: block; flex: none; }
button { border: 0; padding: 0; }
.chrome { position: relative; height: 121px; flex: none; background: #000; }
.damask { position: absolute; left: 0; top: 0; }
.speck { position: absolute; left: 0; top: 39px; }
.tabstrip { position: relative; height: 40px; display: flex; align-items: flex-start; padding-left: 6px; box-sizing: border-box; }
.tabsearch { width: 28px; height: 28px; margin: 6px 6px 0 0; border-radius: 9px; background: #151515; display: flex; align-items: center; justify-content: center; }
.tab { position: relative; width: 234px; height: 28px; margin: 6px 4px 0 0; border-radius: 10px; background: #34393c; display: flex; align-items: center; padding: 0 13px 0 8px; box-sizing: border-box; overflow: hidden; }
.tab.active { width: 232px; margin-right: 6px; height: 34px; background: #000; border-radius: 10px 10px 0 0; padding-right: 12px; padding-bottom: 6px; overflow: visible; }
.tab.active::before, .tab.active::after { content: ""; position: absolute; bottom: 0; width: 10px; height: 10px; }
.tab.active::before { left: -10px; background: radial-gradient(circle at 0 0, transparent 9.500px, #000 10px); }
.tab.active::after { right: -10px; background: radial-gradient(circle at 100% 0, transparent 9.500px, #000 10px); }
.tabspeck { position: absolute; left: 0; top: 0; }
.fav { position: relative; margin-right: 8px; }
.tabtext { position: relative; font-size: 12px; font-weight: 600; line-height: 16px; padding-top: 1px; }
.x { position: relative; margin-left: auto; }
.sep { width: 2px; height: 16px; margin: 12px 3px 0 -3px; background: #111; }
.plus { width: 28px; height: 28px; margin: 6px 0 0 2px; border-radius: 14px; background: #34393c; display: flex; align-items: center; justify-content: center; }
.wincontrols { margin-left: auto; width: 137px; height: 40px; background: rgba(0,0,0,.83); display: grid; grid-template-columns: repeat(3, 1fr); }
.wincontrols span { display: flex; align-items: center; justify-content: center; border-left: 1px solid #2b2b2b; padding-right: 2px; }
.wincontrols span:first-child { border: 0; }
.toolbar { position: relative; height: 46px; display: flex; align-items: center; }
.nav { margin-right: 10px; }
.url { width: 1036px; height: 34px; border-radius: 17px; background: #323232; display: flex; align-items: center; font-size: 14px; box-sizing: border-box; padding: 0 16px 0 4px; }
.info { width: 26px; height: 26px; border-radius: 13px; background: #131313; display: flex; align-items: center; justify-content: center; margin-right: 7px; }
.host, .path { padding-bottom: 1px; }
.path { color: #a3a3a3; }
.star { margin-left: auto; }
.off { font: 700 9.500px "Open Sans", sans-serif; fill: #fff; }
.bookmarks { position: relative; height: 27px; display: flex; align-items: center; gap: 16px; padding-left: 12px; font-size: 12px; font-weight: 500; -webkit-text-stroke: .25px; color: #eceef0; }
.bookmarks a { display: flex; align-items: center; gap: 6px; }
.bookmarks span { padding-bottom: 1px; }
.lz { font: 11px "Open Sans", sans-serif; fill: #fff; }
.more { margin-left: auto; margin-right: -35px; }
.all { margin-right: 14px; }
.decoration { height: 2px; flex: none; background: linear-gradient(90deg, #ff4b4b, #fffd80); }
.app { position: relative; flex: 1; display: flex; height: 615px; overflow: hidden; font-family: "Noto Sans CJK SC", "Noto Sans", sans-serif; color: #fafafa; }
.sidebar { width: 379px; box-sizing: border-box; background: #262730; padding: 17px 24px 0; flex: none; }
.close { margin-left: 325px; }
h2 { margin: 81px 0 0; height: 36px; font-size: 21.500px; line-height: 36px; font-weight: 700; }
label { display: flex; height: 20px; margin-top: 18px; font-size: 12.600px; line-height: 20px; font-weight: 500; }
h2 + label { margin-top: 16px; }
.select { height: 40px; margin-top: 6px; border-radius: 8px; background: #0e1117; display: flex; align-items: center; padding: 0 15px 0 11px; font-size: 14.500px; line-height: 24px; box-sizing: border-box; }
.select svg { margin-left: auto; }
.select.focus { height: 41px; border: 1px solid #ff4b4b; padding: 0 14px 0 10px; }
.select.focus span { padding-bottom: 1px; }
.caret { width: 1px; height: 20px; margin-left: 2px; background: #fff; }
.code { margin: 16px 0 0; height: 127px; box-sizing: border-box; padding: 17px 16px 0; border-radius: 8px; background: #1a1c24; overflow: hidden; font: 13px/22.400px "DejaVu Sans Mono", monospace; }
.code div { height: 22.400px; }
.main { flex: 1; background: #0e1117; }
.status { height: 44px; display: flex; align-items: center; padding-left: 722px; font-size: 12.800px; line-height: 20px; }
.run { color: #85878d; margin-left: 8px; }
.stop { margin-left: 20px; }
.deploy { margin-left: 26px; }
.kebab { margin-left: 24.500px; }
h1 { margin: 30px 0 0 138px; height: 71px; font-size: 40px; line-height: 52px; font-weight: 700; }
.map { position: relative; width: 700px; height: 470px; margin-left: 139px; overflow: hidden; }
.map text { paint-order: stroke; stroke: rgba(255,255,255,.75); stroke-width: 2px; stroke-linejoin: round; font-family: "Noto Sans", "DejaVu Sans", sans-serif; fill: #222; font-size: 10.500px; }
.map text.s { font-style: italic; fill: #86608d; font-size: 10.600px; }
.map text.u { font-style: normal; }
.map text.b { font-size: 12.300px; }
.map text.n { font-size: 12.600px; fill: #7d5b87; letter-spacing: .5px; }
.zoom { position: absolute; left: 10px; top: 10px; width: 30px; border: 2px solid rgba(0,0,0,.2); border-radius: 4px; background: #fff; background-clip: padding-box; }
.zoom a { display: block; height: 29px; color: #000; text-align: center; font: bold 23px/34px "Liberation Mono", monospace; }
.zoom a:first-child { border-bottom: 1px solid #ccc; }
.scroll { position: absolute; right: 0; top: 0; width: 6px; height: 615px; background: #0e1117; }
.scroll i { display: block; width: 6px; height: 290px; margin-top: 44px; background: #6e6f72; border-radius: 0 0 3px 3px; }
.taskbar { height: 30px; flex: none; display: flex; align-items: center; background: #454a66; }
.start { width: 36px; display: flex; padding-left: 10px; box-sizing: border-box; }
.search { width: 258px; height: 30px; box-sizing: border-box; border: 1px solid #7c7b92; background: #64637a; display: flex; align-items: center; padding-left: 10px; font-size: 15px; color: #dedee6; }
.search span { margin-left: 11px; }
.flower { margin-left: auto; margin-right: 13px; }
.taskview { width: 38.500px; padding-left: 10px; box-sizing: border-box; }
.apps { display: flex; }
.cell { position: relative; width: 31.080px; height: 30px; display: flex; align-items: center; justify-content: center; }
.cell.on { background: #6e6ea3; }
.cell.u::after { content: ""; position: absolute; left: 4px; bottom: 0; width: 22px; height: 2px; background: #c8c2fb; }
.cell.on::after { left: 0; width: 31px; }
.cell.two::after { background: linear-gradient(90deg, #c8c2fb 13px, #5f6078 13px, #5f6078 14px, #9d99c6 14px); }
.pct { font: 700 7.500px "Open Sans", sans-serif; fill: #fff; }
.tray { flex: 1; display: flex; align-items: center; padding-left: 33.700px; height: 30px; }
.temp { font-size: 15px; margin-left: 6px; }
.sys { margin-left: 19px; }
.clock { font-size: 12px; margin-left: 1.500px; padding-bottom: 1px; }
.note { margin: 2px 0 0 17px; }
.tray::after { content: ""; width: 1px; height: 30px; margin-left: auto; margin-right: 3px; background: #7b7e92; }
</style>
